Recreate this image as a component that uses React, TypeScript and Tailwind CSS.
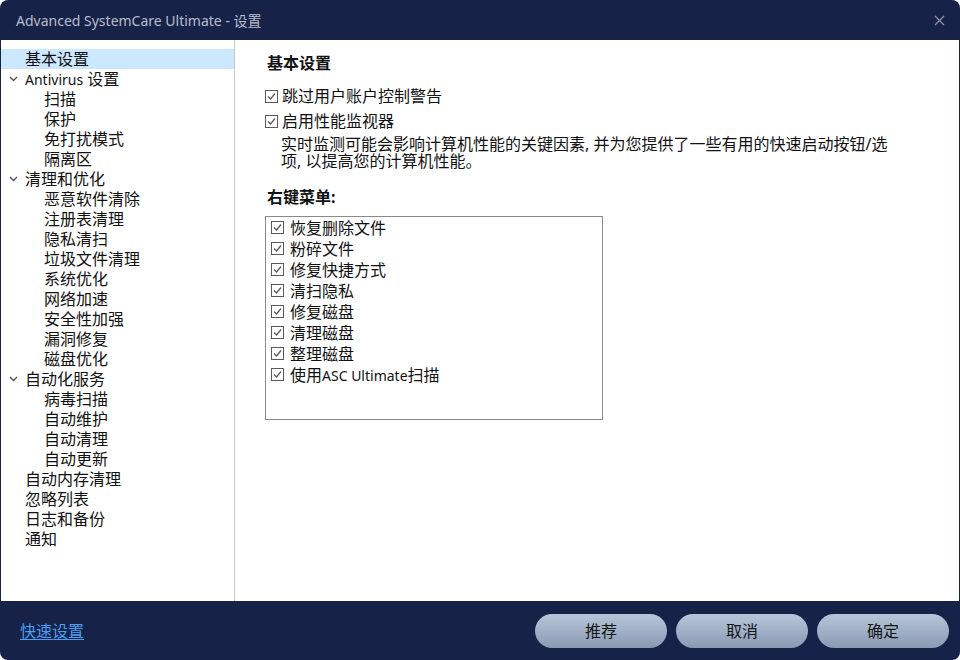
import React from "react";

const font = { fontFamily: '"Noto Sans", "Noto Sans CJK SC", sans-serif' };

type NavItem = { label: string; level: 0 | 1; chevron?: boolean; active?: boolean };

const navItems: NavItem[] = [
  { label: "基本设置", level: 0, active: true },
  { label: "Antivirus 设置", level: 0, chevron: true },
  { label: "扫描", level: 1 },
  { label: "保护", level: 1 },
  { label: "免打扰模式", level: 1 },
  { label: "隔离区", level: 1 },
  { label: "清理和优化", level: 0, chevron: true },
  { label: "恶意软件清除", level: 1 },
  { label: "注册表清理", level: 1 },
  { label: "隐私清扫", level: 1 },
  { label: "垃圾文件清理", level: 1 },
  { label: "系统优化", level: 1 },
  { label: "网络加速", level: 1 },
  { label: "安全性加强", level: 1 },
  { label: "漏洞修复", level: 1 },
  { label: "磁盘优化", level: 1 },
  { label: "自动化服务", level: 0, chevron: true },
  { label: "病毒扫描", level: 1 },
  { label: "自动维护", level: 1 },
  { label: "自动清理", level: 1 },
  { label: "自动更新", level: 1 },
  { label: "自动内存清理", level: 0 },
  { label: "忽略列表", level: 0 },
  { label: "日志和备份", level: 0 },
  { label: "通知", level: 0 },
];

const menuItems = [
  "恢复删除文件",
  "粉碎文件",
  "修复快捷方式",
  "清扫隐私",
  "修复磁盘",
  "清理磁盘",
  "整理磁盘",
];

const CheckBox = () => (
  <svg width="13" height="13" viewBox="0 0 13 13" className="shrink-0">
    <rect x="0.5" y="0.5" width="12" height="12" fill="white" stroke="#5a5a5a" />
    <polyline points="3,6.5 5.5,9 10,3.5" fill="none" stroke="#5a5a5a" strokeWidth="1.3" />
  </svg>
);

const Chevron = () => (
  <svg width="9" height="6" viewBox="0 0 9 6" className="shrink-0">
    <polyline points="1,1 4.5,4.5 8,1" fill="none" stroke="#555" strokeWidth="1.4" />
  </svg>
);

export default function App() {
  return (
    <div className="w-[960px] h-[660px] bg-[#172249] rounded-[8px] overflow-hidden flex flex-col px-px" style={font}>
      {/* title bar */}
      <div className="h-[40px] flex items-center justify-between pl-[15px] pr-[14px] shrink-0">
        <span className="text-[14px] text-[#b9bdcb]">Advanced SystemCare Ultimate - 设置</span>
        <svg width="11" height="11" viewBox="0 0 11 11">
          <path d="M1 1L10 10M10 1L1 10" stroke="#8c92aa" strokeWidth="1.3" />
        </svg>
      </div>

      {/* body */}
      <div className="flex-1 bg-white flex min-h-0">
        <div className="w-[234px] border-r border-[#c6c6c6] pt-[9px] shrink-0">
          {navItems.map((item) => (
            <div
              key={item.label}
              className={`h-[20px] flex items-center text-[16px] leading-[20px] text-[#111] ${
                item.active ? "bg-[#cce8ff]" : ""
              }`}
            >
              <div className="w-[24px] flex justify-center pl-[1px]">{item.chevron && <Chevron />}</div>
              <span className={item.level === 1 ? "pl-[19px]" : ""}>
                {item.label === "Antivirus 设置" ? (
                  <>
                    <span className="text-[14px]">Antivirus</span> 设置
                  </>
                ) : (
                  item.label
                )}
              </span>
            </div>
          ))}
        </div>

        <div className="flex-1 pl-[30px] pt-[12px] text-[#111]">
          <div className="text-[16px] font-bold leading-[22px] pl-[2px]">基本设置</div>

          <div className="mt-[10px] flex items-center gap-[4px] h-[24px] text-[16px]">
            <CheckBox />
            <span>跳过用户账户控制警告</span>
          </div>
          <div className="mt-[1px] flex items-center gap-[4px] h-[24px] text-[16px]">
            <CheckBox />
            <span>启用性能监视器</span>
          </div>
          <p className="pl-[16px] text-[16px] leading-[17px] whitespace-nowrap mt-[3px]">
            实时监测可能会影响计算机性能的关键因素, 并为您提供了一些有用的快速启动按钮/选
            <br />
            项, 以提高您的计算机性能。
          </p>

          <div className="mt-[16px] text-[16px] font-bold leading-[22px] pl-[2px]">右键菜单:</div>

          <div className="mt-[8px] w-[338px] h-[204px] border border-[#8a8a8a] pl-[5px]">
            {menuItems.map((m) => (
              <div key={m} className="h-[21px] flex items-center gap-[6px] text-[16px]">
                <CheckBox />
                <span>{m}</span>
              </div>
            ))}
            <div className="h-[21px] flex items-center gap-[6px] text-[16px]">
              <CheckBox />
              <span>
                使用<span className="text-[14px]">ASC Ultimate</span>扫描
              </span>
            </div>
          </div>
        </div>
      </div>

      {/* footer */}
      <div className="h-[59px] shrink-0 flex items-center justify-between pl-[19px] pr-[10px]">
        <a className="text-[16px] text-[#4a9ff0] underline underline-offset-2 cursor-pointer">快速设置</a>
        <div className="flex gap-[9px] pt-[1px]">
          {["推荐", "取消", "确定"].map((b) => (
            <button
              key={b}
              className="w-[132px] h-[34px] rounded-full bg-gradient-to-b from-[#b8c6da] to-[#8a9ab4] text-[16px] text-[#141414]"
            >
              {b}
            </button>
          ))}
        </div>
      </div>
    </div>
  );
}
